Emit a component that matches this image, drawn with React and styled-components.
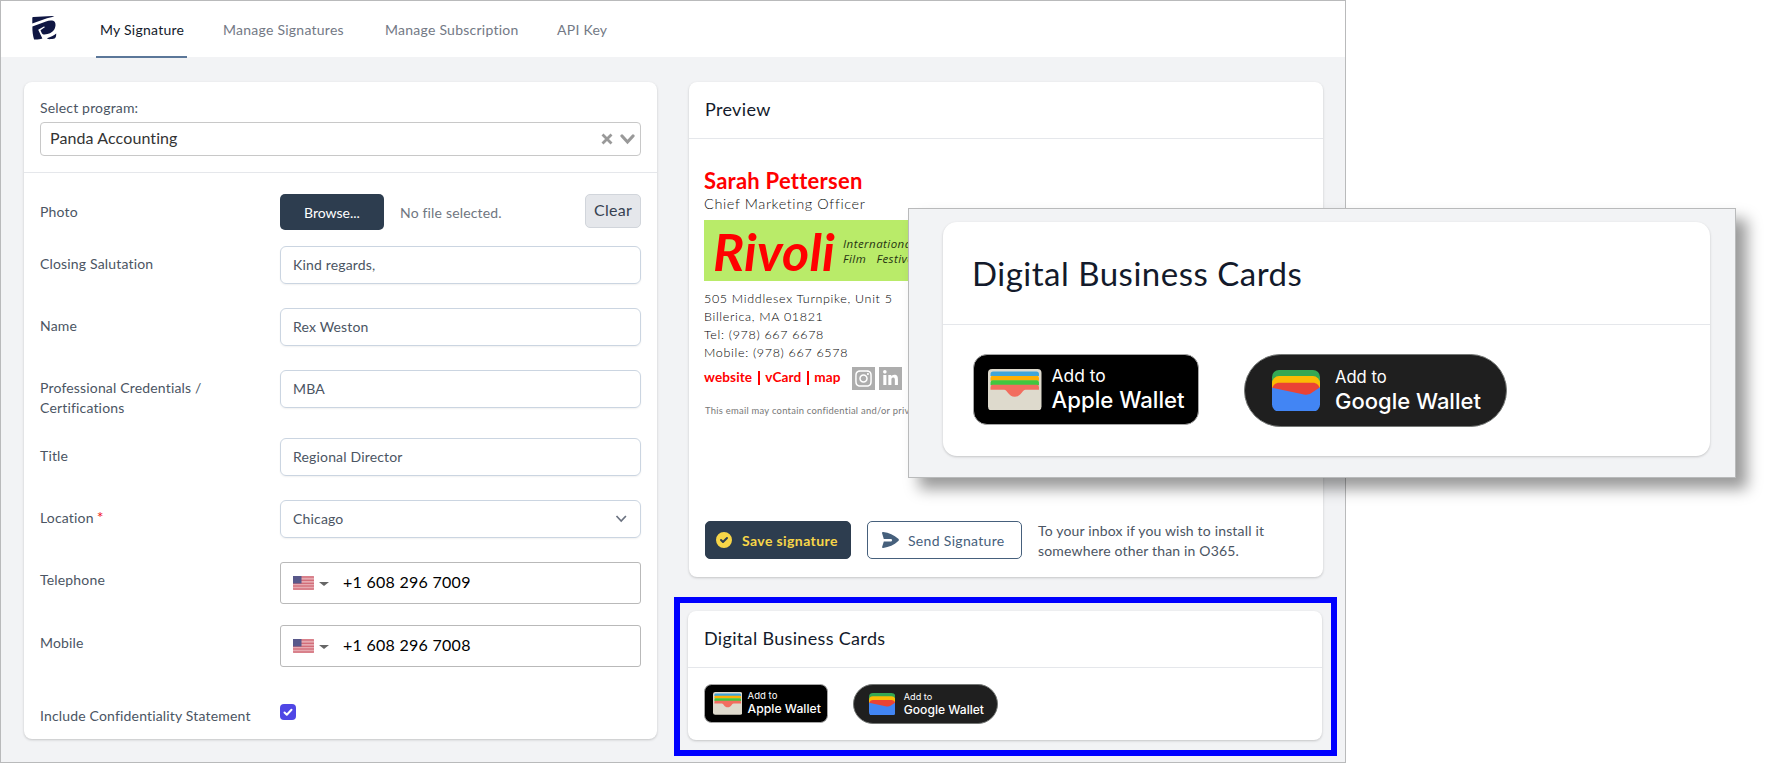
import React from 'react'
import styled, { createGlobalStyle } from 'styled-components'
import { FaInstagram, FaLinkedinIn } from 'react-icons/fa'
import { HiCheckCircle } from 'react-icons/hi'

const GlobalStyle = createGlobalStyle`
  * {
    box-sizing: border-box;
  }
  body {
    background: #fff;
    color: #4b5563;
    font-family: Lato, 'Open Sans', sans-serif;
    font-size: 14px;
    letter-spacing: 0.17px;
    line-height: 20px;
    margin: 0;
    overflow: hidden;
  }
  svg {
    display: block;
    flex: none;
  }
`
const Screen = styled.div`
  height: 763px;
  position: relative;
  width: 1767px;
`
const Frame = styled.div`
  background: #f2f3f5;
  border: 1px solid #b9babb;
  height: 763px;
  width: 1346px;
`
const Nav = styled.nav`
  background: #fff;
  display: flex;
  gap: 32px;
  height: 56px;
  letter-spacing: 0.25px;
  padding-left: 31px;
`
const Brand = styled.div`
  padding: 15px 7px 0 0;
`
const NavItem = styled.a`
  border-bottom: 2px solid ${props => (props.$active ? '#5b7799' : 'transparent')};
  color: ${props => (props.$active ? '#131a2b' : '#737985')};
  height: 57px;
  padding: 19px 4px 0;
  white-space: nowrap;
  width: ${props => props.$w}px;
`
const Columns = styled.div`
  display: grid;
  gap: 32px;
  grid-template-columns: 633px 634px;
  padding: 25px 0 0 23px;
`
const Card = styled.section`
  background: #fff;
  border-radius: ${props => props.$radius || 8}px;
  box-shadow: 0 1px 3px rgba(0, 0, 0, 0.14), 0 1px 2px rgba(0, 0, 0, 0.06);
  height: ${props => props.$h}px;
`
const Program = styled.div`
  border-bottom: 1px solid #e5e7eb;
  height: 91px;
  padding: 16px 16px 0;
`
const ProgramSelect = styled.div`
  align-items: center;
  border: 1px solid #c8c8c8;
  border-radius: 4px;
  color: #333;
  display: flex;
  font-size: 16px;
  gap: 7px;
  height: 34px;
  letter-spacing: 0.1px;
  margin-top: 4px;
  padding: 0 5px 0 9px;
  span {
    flex: 1;
    padding-bottom: 2px;
  }
`
const Fields = styled.div`
  padding: 21px 16px 0;
`
const Row = styled.div`
  align-items: start;
  display: grid;
  grid-template-columns: 240px 361px;
  height: ${props => props.$h}px;
`
const Label = styled.label`
  padding-top: ${props => (props.$top === undefined ? 8 : props.$top)}px;
  max-width: ${props => props.$max || 230}px;
`
const Required = styled.span`
  color: #f01818;
  font-size: 16px;
  line-height: 16px;
  margin-left: 3px;
`
const Field = styled.div`
  align-items: center;
  border: 1px solid #cbd5e1;
  border-radius: 6px;
  box-shadow: 0 1px 2px rgba(0, 0, 0, 0.06);
  display: flex;
  height: 38px;
  justify-content: space-between;
  padding: 0 12px;
`
const PhoneField = styled.div`
  align-items: center;
  border: 1px solid #b9b9b9;
  border-radius: 3px;
  color: #000;
  display: flex;
  font-size: 16px;
  height: 42px;
  letter-spacing: 0.27px;
  padding-left: 12px;
  span {
    padding-bottom: 2px;
  }
`
const Caret = styled.i`
  border: 5px solid transparent;
  border-bottom: 0;
  border-top: 4px solid #666;
  margin: 2px 14px 0 5px;
`
const FileRow = styled.div`
  align-items: flex-start;
  display: flex;
`
const Browse = styled.button`
  background: #2d3d4f;
  border: 0;
  border-radius: 5px;
  color: #fff;
  font: 14px Lato, sans-serif;
  height: 36px;
  padding-top: 2px;
  width: 104px;
`
const NoFile = styled.span`
  color: #6f7681;
  flex: 1;
  padding: 9px 0 0 16px;
`
const Clear = styled.button`
  background: #e5e7eb;
  border: 1px solid #d1d5db;
  border-radius: 5px;
  color: #374151;
  font: 16px Lato, sans-serif;
  height: 34px;
  letter-spacing: 0.3px;
  padding: 0 0 3px;
  width: 56px;
`
const Checkbox = styled.span`
  background: #4f46e5;
  border-radius: 4px;
  height: 16px;
  width: 16px;
`
const CardHeader = styled.h2`
  border-bottom: 1px solid #e5e7eb;
  color: #131a2b;
  font-size: ${props => (props.$large ? 33 : 18)}px;
  font-weight: 400;
  height: ${props => (props.$large ? 103 : 57)}px;
  letter-spacing: ${props => (props.$large ? 0.5 : 0.33)}px;
  line-height: ${props => (props.$large ? 102 : 55)}px;
  margin: 0;
  padding-left: ${props => (props.$large ? 29 : 16)}px;
`
const Signature = styled.div`
  height: 382px;
  padding: 28px 15px 0;
  white-space: nowrap;
`
const Person = styled.div`
  color: #f00;
  font-size: 22px;
  font-weight: 700;
  letter-spacing: 0.25px;
  line-height: 27px;
`
const Position = styled.div`
  color: #111;
  font-size: 14.5px;
  font-weight: 300;
  letter-spacing: 0.6px;
  line-height: 20px;
`
const Banner = styled.div`
  align-items: center;
  background: #b9eb69;
  display: flex;
  height: 61px;
  margin: 6px 0 9px;
  padding-left: 9px;
  width: 300px;
`
const BannerName = styled.span`
  color: #f00;
  font-size: 52px;
  font-style: italic;
  font-weight: 700;
  letter-spacing: 0.2px;
  line-height: 58px;
  width: 130px;
`
const BannerText = styled.span`
  color: #263312;
  font: italic 500 11.5px/15px 'Open Sans', sans-serif;
  letter-spacing: 0.45px;
  white-space: pre;
`
const Address = styled.div`
  color: #000;
  font-size: 12.5px;
  font-weight: 300;
  letter-spacing: 0.68px;
  line-height: 18px;
`
const Links = styled.div`
  align-items: center;
  color: #f00;
  display: flex;
  font-size: 13.6px;
  font-weight: 700;
  height: 25px;
  letter-spacing: 0.1px;
  margin-top: 4px;
`
const LinkText = styled.span`
  padding-bottom: 3px;
`
const Bar = styled.i`
  background: #f00;
  height: 14px;
  margin: 0 5px 2px 6px;
  width: 2px;
`
const Social = styled.span`
  align-items: center;
  background: #adadad;
  color: #fff;
  display: flex;
  height: 23px;
  justify-content: center;
  margin-left: ${props => props.$gap}px;
  width: 23px;
`
const Disclaimer = styled.div`
  color: #777;
  font-size: 9.4px;
  letter-spacing: 0.27px;
  line-height: 12px;
  margin: 14px 0 0 1px;
`
const Actions = styled.div`
  align-items: flex-start;
  display: flex;
  gap: 16px;
  padding-left: 16px;
`
const Action = styled.button`
  align-items: center;
  background: ${props => (props.$primary ? '#2d3d4f' : '#fff')};
  border: 1px solid ${props => (props.$primary ? '#2d3d4f' : '#46607c')};
  border-radius: 5px;
  color: ${props => (props.$primary ? '#f8d648' : '#46607c')};
  display: flex;
  font: ${props => (props.$primary ? 700 : 400)} 14px Lato, sans-serif;
  gap: ${props => (props.$primary ? 8 : 9)}px;
  height: 38px;
  letter-spacing: ${props => (props.$primary ? 0.4 : 0.32)}px;
  padding: 0 0 0 ${props => (props.$primary ? 8 : 14)}px;
  white-space: nowrap;
  width: ${props => (props.$primary ? 146 : 155)}px;
`
const Hint = styled.p`
  margin: 0;
  white-space: nowrap;
`
const Highlight = styled.div`
  border: 6px solid #00f;
  height: 159px;
  margin: 20px -14px 0 -15px;
  padding: 8px 9px 0 8px;
`
const Popup = styled.div`
  background: #f2f3f5;
  border: 1px solid #b9babb;
  box-shadow: 11px 11px 14px rgba(0, 0, 0, 0.4);
  height: 270px;
  left: 908px;
  padding: 13px 25px 0 34px;
  position: absolute;
  top: 208px;
  width: 828px;
`
const Wallets = styled.div`
  align-items: flex-start;
  display: flex;
  gap: ${props => (props.$large ? 45 : 25)}px;
  padding: ${props => (props.$large ? '29px 0 0 30px' : '16px 0 0 16px')};
`
/* badge sizes are in em, so one font-size scales the whole badge */
const Badge = styled.div`
  align-items: center;
  background: ${props => (props.$google ? '#1f1f1f' : '#000')};
  border: 1px solid ${props => (props.$google ? '#747775' : '#a6a6a6')};
  border-radius: ${props => (props.$google ? 3.7 : 1.4)}em;
  color: #fff;
  display: flex;
  font-family: Inter, sans-serif;
  font-size: ${props => (props.$large ? 10 : 5.5)}px;
  gap: ${props => (props.$google ? 1.55 : 1)}em;
  height: ${props => (props.$google ? 7.3 : 7.05)}em;
  letter-spacing: 0;
  padding-left: ${props => (props.$google ? 2.65 : 1.4)}em;
  width: ${props => (props.$google ? 26.3 : 22.6)}em;
  svg {
    height: 4.15em;
    width: ${props => (props.$google ? 4.8 : 5.35)}em;
  }
`
const BadgeText = styled.div`
  small,
  strong {
    display: block;
    white-space: nowrap;
  }
  small {
    font-size: ${props => (props.$google ? 1.66 : 1.74)}em;
    line-height: 1.25;
  }
  strong {
    font-size: ${props => (props.$google ? 2.2 : 2.22)}em;
    font-weight: 500;
    line-height: 1.2;
  }
`

const Logo = () => (
  <svg width="25" height="24" viewBox="0 0 25 24" fill="#0f1642">
    <path d="M.3 2C.3 1.400.8 1.200 1.500 1.100L20 .1c1 0 1.800.2 2.300.5L15 2.200.3 7.400z" />
    <path d="M.4 10.500L14 5.400c3.500-1.200 7.500-1.200 8.800.6 1.300 1.800.8 5.800-.8 8-2 2.700-5.500 4.300-9.500 4.500-1.300 0-2.200-.4-2.700-1.300l-1.300-3 4.600-3.200-1.200-.6-5.700 3.300 4.200 8.700c-2.500.9-6 1.400-8.300 1.100C1 20 .2 15 .4 10.500z" />
    <path d="M24.200 17.500c-2.500 2-5.700 3.600-9.200 4.700l1 .9c2.600.1 5-.1 6.600-.6 1.200-.5 1.700-2.600 1.600-5z" />
  </svg>
)

const Flag = () => (
  <svg width="21" height="14" viewBox="0 0 21 14">
    <rect width="21" height="14" rx="1" fill="#e6aab1" />
    <path d="M0 1h21M0 4.200h21M0 7.300h21M0 10h21M0 13h21" stroke="#cc5967" strokeWidth="1.100" />
    <rect width="8.500" height="7.500" fill="#58588a" />
  </svg>
)

const AppleWalletIcon = () => (
  <svg viewBox="0 0 53 41" preserveAspectRatio="none">
    <rect width="53" height="41" rx="4" fill="#dedacd" />
    <path d="M2.500 7V5a2.500 2.500 0 0 1 2.500-2.500h43A2.500 2.500 0 0 1 50.500 5v2z" fill="#40a5d9" />
    <path d="M2.500 11.500V9A2.300 2.300 0 0 1 5 6.800h43A2.300 2.300 0 0 1 50.500 9v2.500z" fill="#ffb003" />
    <path d="M2.500 16v-2.600A2.300 2.300 0 0 1 5 11.200h43a2.300 2.300 0 0 1 2.500 2.200V16z" fill="#40c740" />
    <path d="M2.500 20.500v-2.700A2.300 2.300 0 0 1 5 15.600h43a2.300 2.300 0 0 1 2.500 2.200v2.700H37c-3 0-4.500 7-10.500 7s-7.500-7-10.500-7z" fill="#f26d5f" />
  </svg>
)

const GoogleWalletIcon = () => (
  <svg viewBox="0 0 48 41" preserveAspectRatio="none">
    <path d="M0 15V7a7 7 0 0 1 7-7h34a7 7 0 0 1 7 7v8z" fill="#34a853" />
    <path d="M0 20v-7a7 7 0 0 1 7-7h34a7 7 0 0 1 7 7v7z" fill="#fbbc04" />
    <path d="M0 18.500C1 14.500 4 12.500 7 12.500h34c3 0 6 2 7 6V28H0z" fill="#ea4335" />
    <path d="M0 17.500l32 6.700c2.500.5 5 .2 7-1.200l9-6V34a7 7 0 0 1-7 7H7a7 7 0 0 1-7-7z" fill="#4285f4" />
  </svg>
)

const WalletCard = ({ large, height }) => (
  <Card $h={height} $radius={large ? 14 : 8}>
    <CardHeader $large={large}>Digital Business Cards</CardHeader>
    <Wallets $large={large}>
      <Badge $large={large}>
        <AppleWalletIcon />
        <BadgeText>
          <small>Add to</small>
          <strong>Apple Wallet</strong>
        </BadgeText>
      </Badge>
      <Badge $google $large={large}>
        <GoogleWalletIcon />
        <BadgeText $google>
          <small>Add to</small>
          <strong>Google Wallet</strong>
        </BadgeText>
      </Badge>
    </Wallets>
  </Card>
)

const Phone = ({ number }) => (
  <PhoneField>
    <Flag />
    <Caret />
    <span>{number}</span>
  </PhoneField>
)

const SignatureForm = () => (
  <Card $h={657}>
    <Program>
      Select program:
      <ProgramSelect>
        <span>Panda Accounting</span>
        <svg width="12" height="12" viewBox="0 0 12 12" stroke="#999" strokeWidth="2.800">
          <path d="M1.500 1.500l9 9M10.500 1.500l-9 9" />
        </svg>
        <svg width="15" height="12" viewBox="0 0 15 12" fill="none" stroke="#999" strokeWidth="3.200" strokeLinecap="round">
          <path d="M2 3l5.500 6L13 3" />
        </svg>
      </ProgramSelect>
    </Program>
    <Fields>
      <Row $h={52}>
        <Label>Photo</Label>
        <FileRow>
          <Browse>Browse...</Browse>
          <NoFile>No file selected.</NoFile>
          <Clear>Clear</Clear>
        </FileRow>
      </Row>
      <Row $h={62}>
        <Label>Closing Salutation</Label>
        <Field>Kind regards,</Field>
      </Row>
      <Row $h={62}>
        <Label>Name</Label>
        <Field>Rex Weston</Field>
      </Row>
      <Row $h={68}>
        <Label $max={190}>Professional Credentials / Certifications</Label>
        <Field>MBA</Field>
      </Row>
      <Row $h={62}>
        <Label>Title</Label>
        <Field>Regional Director</Field>
      </Row>
      <Row $h={62}>
        <Label>Location<Required>*</Required></Label>
        <Field>
          Chicago
          <svg width="14" height="12" viewBox="0 0 14 12" fill="none" stroke="#6b7280" strokeWidth="1.700">
            <path d="M2.500 3l4.700 5 4.700-5" />
          </svg>
        </Field>
      </Row>
      <Row $h={63}>
        <Label>Telephone</Label>
        <Phone number="+1 608 296 7009" />
      </Row>
      <Row $h={79}>
        <Label>Mobile</Label>
        <Phone number="+1 608 296 7008" />
      </Row>
      <Row $h={35}>
        <Label $top={2}>Include Confidentiality Statement</Label>
        <Checkbox>
          <svg width="16" height="16" viewBox="0 0 16 16" fill="none" stroke="#fff" strokeWidth="2" strokeLinecap="round" strokeLinejoin="round">
            <path d="M4.500 8.500l2.300 2.300 4.700-5" />
          </svg>
        </Checkbox>
      </Row>
    </Fields>
  </Card>
)

const Preview = () => (
  <Card $h={495}>
    <CardHeader>Preview</CardHeader>
    <Signature>
      <Person>Sarah Pettersen</Person>
      <Position>Chief Marketing Officer</Position>
      <Banner>
        <BannerName>Rivoli</BannerName>
        <BannerText>{'International\nFilm   Festival'}</BannerText>
      </Banner>
      <Address>
        505 Middlesex Turnpike, Unit 5<br />
        Billerica, MA 01821<br />
        Tel: (978) 667 6678<br />
        Mobile: (978) 667 6578
      </Address>
      <Links>
        <LinkText>website</LinkText>
        <Bar />
        <LinkText>vCard</LinkText>
        <Bar />
        <LinkText>map</LinkText>
        <Social $gap={11}><FaInstagram size={19} /></Social>
        <Social $gap={4}><FaLinkedinIn size={17} /></Social>
      </Links>
      <Disclaimer>This email may contain confidential and/or privileged</Disclaimer>
    </Signature>
    <Actions>
      <Action $primary>
        <HiCheckCircle size={20} />
        Save signature
      </Action>
      <Action>
        <svg width="17" height="16" viewBox="0 0 17 16" fill="#46607c">
          <path d="M0 1C0 .3.500-.1 1.200 0 7 .8 12 3 16.300 6.800c.8.700.8 1.600 0 2.300C12 13 7 15.300 1.200 16 .5 16.100-.1 15.600.1 14.900L1.800 9.400h7c1.700 0 1.700-2.500 0-2.500h-7z" />
        </svg>
        Send Signature
      </Action>
      <Hint>
        To your inbox if you wish to install it<br />
        somewhere other than in O365.
      </Hint>
    </Actions>
  </Card>
)

const App = () => (
  <Screen>
    <GlobalStyle />
    <Frame>
      <Nav>
        <Brand><Logo /></Brand>
        <NavItem $active $w={91}>My Signature</NavItem>
        <NavItem $w={130}>Manage Signatures</NavItem>
        <NavItem $w={140}>Manage Subscription</NavItem>
        <NavItem $w={58}>API Key</NavItem>
      </Nav>
      <Columns>
        <SignatureForm />
        <div>
          <Preview />
          <Highlight>
            <WalletCard height={129} />
          </Highlight>
        </div>
      </Columns>
    </Frame>
    <Popup>
      <WalletCard large height={234} />
    </Popup>
  </Screen>
)

export default App
